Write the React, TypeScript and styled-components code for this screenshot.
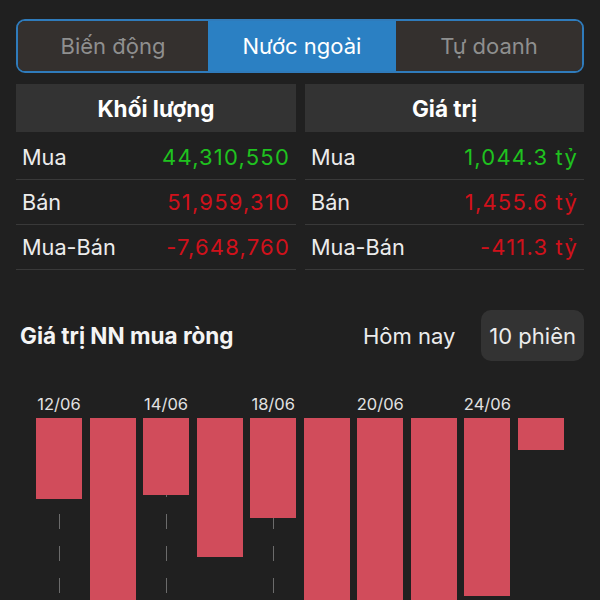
import React from 'react';
import styled, { createGlobalStyle } from 'styled-components';

const GlobalStyle = createGlobalStyle`
    html, body {
        margin: 0;
        padding: 0;
        background: #202020;
    }
    body {
        font-family: Inter, "Noto Sans", "DejaVu Sans", sans-serif;
        color: #f2f2f2;
    }
`;

const Page = styled.div`
    height: 600px;
    overflow: hidden;
    padding: 19px 16px 0;
    box-sizing: border-box;
    background: #202020;
`;

const Segmented = styled.div`
    display: grid;
    grid-template-columns: 190px 188px 1fr;
    height: 54px;
    box-sizing: border-box;
    border: 2px solid #2f7bbb;
    border-radius: 9px;
    overflow: hidden;
`;

const Segment = styled.div<{ active?: boolean }>`
    display: flex;
    align-items: center;
    justify-content: center;
    font-size: 22px;
    color: ${p => (p.active ? '#ffffff' : '#8f8f8f')};
    background: ${p => (p.active ? '#2b80c3' : '#34302e')};
`;

const StatsGrid = styled.div`
    display: grid;
    grid-template-columns: 280px 1fr;
    column-gap: 9px;
    margin-top: 11px;
`;

const StatsColumn = styled.div`
    display: flex;
    flex-direction: column;
`;

const HeaderCell = styled.div`
    height: 48px;
    display: flex;
    align-items: center;
    justify-content: center;
    background: #333333;
    font-size: 22.5px;
    font-weight: 700;
    color: #ffffff;
    margin-bottom: 3px;
`;

const Row = styled.div`
    height: 44px;
    display: flex;
    align-items: center;
    justify-content: space-between;
    padding: 0 7px 0 6px;
    border-bottom: 1px solid #393939;
    font-size: 21.7px;
`;

const Label = styled.span`
    color: #ececec;
`;

const Value = styled.span<{ tone: 'up' | 'down' }>`
    font-size: 22px;
    letter-spacing: 1.2px;
    margin-right: -1px;
    color: ${p => (p.tone === 'up' ? '#1fc21f' : '#d0111b')};
`;

const SectionHeader = styled.div`
    display: flex;
    align-items: center;
    margin-top: 40px;
    height: 51px;
`;

const Title = styled.div`
    flex: 1;
    padding-left: 4px;
    font-size: 22.5px;
    font-weight: 700;
    color: #f4f4f4;
`;

const RangeOption = styled.div<{ selected?: boolean }>`
    height: 51px;
    display: flex;
    align-items: center;
    padding: 0 ${p => (p.selected ? '8px' : '0')};
    margin-left: ${p => (p.selected ? '26px' : '0')};
    border-radius: 10px;
    background: ${p => (p.selected ? '#333333' : 'transparent')};
    font-size: 22px;
    color: #ececec;
`;

const Chart = styled.div`
    display: flex;
    justify-content: space-between;
    padding: 0 20px;
    margin-top: 33px;
`;

const BarColumn = styled.div`
    width: 46px;
    display: flex;
    flex-direction: column;
    align-items: center;
`;

const DateLabel = styled.div`
    height: 20px;
    line-height: 20px;
    font-size: 16.5px;
    color: #e2e2e2;
    white-space: nowrap;
    margin-bottom: 4px;
`;

const Plot = styled.div`
    position: relative;
    width: 100%;
    height: 200px;
`;

const GridLine = styled.div`
    position: absolute;
    left: 50%;
    top: 0;
    bottom: 0;
    width: 1px;
    background: repeating-linear-gradient(to bottom, #6b6b6b 0 15px, transparent 15px 32px);
`;

const Bar = styled.div`
    position: relative;
    width: 100%;
    background: #d14c5b;
`;

const bars = [
    { date: '12/06', h: 81 },
    { date: '', h: 200 },
    { date: '14/06', h: 77 },
    { date: '', h: 139 },
    { date: '18/06', h: 100 },
    { date: '', h: 200 },
    { date: '20/06', h: 200 },
    { date: '', h: 200 },
    { date: '24/06', h: 178 },
    { date: '', h: 32 },
];

const volume = [
    { label: 'Mua', value: '44,310,550', tone: 'up' as const },
    { label: 'Bán', value: '51,959,310', tone: 'down' as const },
    { label: 'Mua-Bán', value: '-7,648,760', tone: 'down' as const },
];

const amount = [
    { label: 'Mua', value: '1,044.3 tỷ', tone: 'up' as const },
    { label: 'Bán', value: '1,455.6 tỷ', tone: 'down' as const },
    { label: 'Mua-Bán', value: '-411.3 tỷ', tone: 'down' as const },
];

const App = () => {
    return (
        <Page>
            <GlobalStyle />
            <Segmented>
                <Segment>Biến động</Segment>
                <Segment active>Nước ngoài</Segment>
                <Segment>Tự doanh</Segment>
            </Segmented>

            <StatsGrid>
                <StatsColumn>
                    <HeaderCell>Khối lượng</HeaderCell>
                    {volume.map(r => (
                        <Row key={r.label}>
                            <Label>{r.label}</Label>
                            <Value tone={r.tone}>{r.value}</Value>
                        </Row>
                    ))}
                </StatsColumn>
                <StatsColumn>
                    <HeaderCell>Giá trị</HeaderCell>
                    {amount.map(r => (
                        <Row key={r.label}>
                            <Label>{r.label}</Label>
                            <Value tone={r.tone}>{r.value}</Value>
                        </Row>
                    ))}
                </StatsColumn>
            </StatsGrid>

            <SectionHeader>
                <Title>Giá trị NN mua ròng</Title>
                <RangeOption>Hôm nay</RangeOption>
                <RangeOption selected>10 phiên</RangeOption>
            </SectionHeader>

            <Chart>
                {bars.map((b, i) => (
                    <BarColumn key={i}>
                        <DateLabel>{b.date || '\u00a0'}</DateLabel>
                        <Plot>
                            {b.date && <GridLine />}
                            <Bar style={{ height: b.h }} />
                        </Plot>
                    </BarColumn>
                ))}
            </Chart>
        </Page>
    );
};

export default App;
